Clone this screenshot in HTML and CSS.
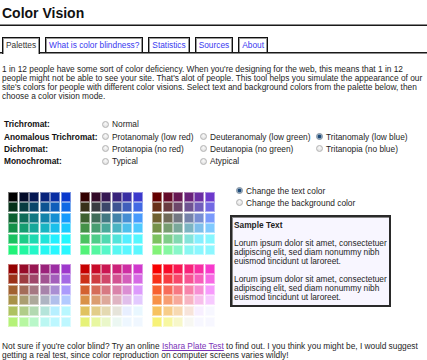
FILE: index.html
```html
<!DOCTYPE html>
<html>
<head>
<meta charset="utf-8">
<title>Color Vision</title>
<link rel="stylesheet" href="styles.css">
</head>
<body>
<div class="page">
  <h1 class="title">Color Vision</h1>
  <div class="rule"></div>
  <ul class="tabs">
    <li class="tab active">Palettes</li>
    <li class="tab"><a href="#">What is color blindness?</a></li>
    <li class="tab"><a href="#">Statistics</a></li>
    <li class="tab"><a href="#">Sources</a></li>
    <li class="tab"><a href="#">About</a></li>
  </ul>
  <p class="intro">1 in 12 people have some sort of color deficiency. When you're designing for the web, this means that 1 in 12<br>people might not be able to see your site. That's alot of people. This tool helps you simulate the appearance of our<br>site's colors for people with different color visions. Select text and background colors from the palette below, then<br>choose a color vision mode.</p>
  <div class="modes">
    <div class="label">Trichromat:</div>
    <label class="opt"><input type="radio" name="mode">Normal</label>
    <span></span><span></span>
    <div class="label">Anomalous Trichromat:</div>
    <label class="opt"><input type="radio" name="mode">Protanomaly (low red)</label>
    <label class="opt"><input type="radio" name="mode">Deuteranomaly (low green)</label>
    <label class="opt"><input type="radio" name="mode" checked>Tritanomaly (low blue)</label>
    <div class="label">Dichromat:</div>
    <label class="opt"><input type="radio" name="mode">Protanopia (no red)</label>
    <label class="opt"><input type="radio" name="mode">Deutanopia (no green)</label>
    <label class="opt"><input type="radio" name="mode">Tritanopia (no blue)</label>
    <div class="label">Monochromat:</div>
    <label class="opt"><input type="radio" name="mode">Typical</label>
    <label class="opt"><input type="radio" name="mode">Atypical</label>
    <span></span>
  </div>
  <div class="work">
    <div class="palettes" id="palettes"></div>
    <div class="side">
      <label class="opt target"><input type="radio" name="target" checked>Change the text color</label>
      <label class="opt target"><input type="radio" name="target">Change the background color</label>
      <div class="sample">
        <h2 class="sample-title">Sample Text</h2>
        <p>Lorum ipsum dolor sit amet, consectetuer adipiscing elit, sed diam nonummy nibh euismod tincidunt ut laroreet.</p>
        <p>Lorum ipsum dolor sit amet, consectetuer adipiscing elit, sed diam nonummy nibh euismod tincidunt ut laroreet.</p>
      </div>
    </div>
  </div>
  <p class="note">Not sure if you're color blind? Try an online <a class="visited" href="#">Ishara Plate Test</a> to find out. I you think you might be, I would suggest<br>getting a real test, since color reproduction on computer screens varies wildly!</p>
</div>
<script src="script.js"></script>
</body>
</html>
```

FILE: styles.css
```css
html { overflow: hidden; }
body {
  margin: 0;
  background: #fff;
  color: #1e1e1e;
  font-family: "Liberation Sans", Arial, sans-serif;
  font-size: 8.33px;
}
.page { width: 440px; padding-left: 2px; }
.title {
  margin: 0;
  padding-top: 5px;
  font-size: 14px;
  line-height: 16px;
  font-weight: bold;
  color: #111;
}
.rule {
  margin: 3px 0 0 -2px;
  border-top: 1px solid #8a8a8a;
  border-bottom: 1px solid #1a1a1a;
}
.tabs {
  list-style: none;
  margin: 11px 0 0 -2px;
  padding: 0 0 0 2px;
  display: flex;
  align-items: flex-end;
  gap: 5px;
  border-bottom: 1px solid #1a1a1a;
  box-shadow: 0 1px 0 #8a8a8a;
}
.tab {
  height: 14px;
  line-height: 14px;
  padding: 0 3px;
  border: 1px solid #111;
  border-bottom: none;
  box-shadow: inset 1px 1px 0 #999, inset -1px 0 0 #999;
  color: #333;
}
.tab a { color: #3a3af0; text-decoration: none; }
.tab.active {
  height: 16px;
  margin-bottom: -2px;
  background: #fff;
  position: relative;
}
.intro {
  margin: 12px 0 0;
  line-height: 9px;
  white-space: nowrap;
}
.modes {
  display: grid;
  grid-template-columns: 102px 98px 116px auto;
  grid-auto-rows: 12.4px;
  align-items: center;
  margin-top: 17px;
  margin-left: -2px;
}
.label { font-weight: bold; padding-left: 4px; color: #111; }
.opt { display: flex; align-items: center; white-space: nowrap; }
.opt input {
  appearance: none;
  -webkit-appearance: none;
  width: 7px;
  height: 7px;
  margin: 0 3px 0 0;
  border: 1px solid #b4b4b4;
  border-radius: 50%;
  background: radial-gradient(circle at 50% 35%, #fafafa, #d8d8d8);
  flex: none;
}
.opt input:checked {
  border-color: #7a8a9a;
  background: radial-gradient(circle, #1e4a78 0 1.4px, #7b9bb8 2px, #e6e6e6 3px);
}
.work {
  display: flex;
  margin-top: 18px;
}
.palettes {
  display: grid;
  grid-template-columns: repeat(3, 63px);
  column-gap: 9px;
  row-gap: 9px;
  margin: 6px 0 0 6px;
}
.pal {
  display: grid;
  grid-template-columns: repeat(6, 1fr);
  grid-template-rows: repeat(6, 1fr);
  gap: 0.6px;
  width: 63px;
  height: 63px;
}
.sw { box-shadow: inset 0 0 0 1px rgba(255,255,255,0.45); }
.side {
  margin-left: 15px;
  display: flex;
  flex-direction: column;
}
.target { margin-left: 6px; height: 12px; }
.target:first-child { margin-top: -1px; }
.sample {
  margin-top: 6px;
  width: 153px;
  height: 84px;
  border: 2px solid #2a2a2a;
  box-shadow: inset 1px 1px 0 #888;
  background: #f8f6ff;
  padding: 2px 2px;
  line-height: 9px;
}
.sample-title { margin: 2px 0 0; font-size: 8.33px; font-weight: bold; line-height: 9px; }
.sample p { margin: 9px 0 0; }
.note { margin: 15px 0 0; line-height: 9px; white-space: nowrap; }
.note .visited { color: #7a33b8; }
```

FILE: script.js
```js
(function () {
  var levels = [0, 0x33, 0x66, 0x99, 0xcc, 0xff];
  function sim(r, g, b) {
    var R = r / 255, G = g / 255, B = b / 255;
    var r2 = Math.min(1, R + 0.13 * G + 0.04 * B) * 0.97;
    var g2 = Math.min(1, 0.98 * G + 0.23 * B) * 0.97;
    var b2 = Math.min(1, 0.47 * G + 0.8 * B);
    return 'rgb(' + Math.round(r2 * 255) + ',' + Math.round(g2 * 255) + ',' + Math.round(b2 * 255) + ')';
  }
  var host = document.getElementById('palettes');
  levels.forEach(function (r) {
    var pal = document.createElement('div');
    pal.className = 'pal';
    levels.forEach(function (g) {
      levels.forEach(function (b) {
        var sw = document.createElement('div');
        sw.className = 'sw';
        sw.style.background = sim(r, g, b);
        pal.appendChild(sw);
      });
    });
    host.appendChild(pal);
  });
})();
```
